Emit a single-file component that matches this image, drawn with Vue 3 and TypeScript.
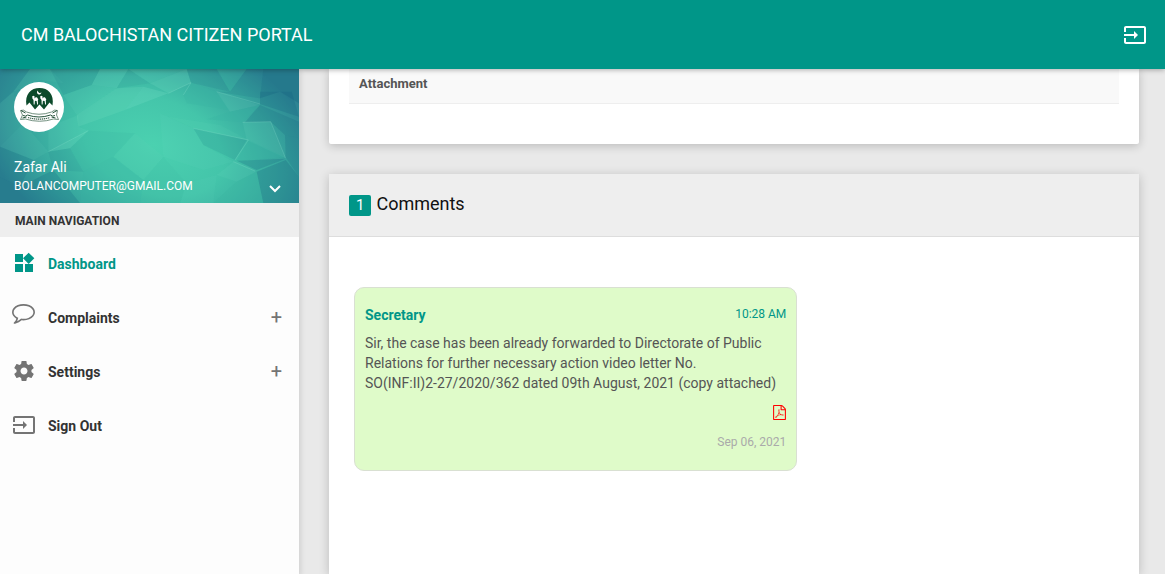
<script setup lang="ts">
import { ref } from 'vue'

interface MenuItem {
  label: string
  icon: string
  viewBox: string
  active?: boolean
  expandable?: boolean
}

interface Facet {
  points: string
  fill: string
  opacity: number
}

interface Comment {
  author: string
  time: string
  date: string
  text: string
  reference: string
  remainder: string
}

const signOutPath =
  'M21 3.01H3c-1.1 0-2 .9-2 2V9h2V4.99h18v14.03H3V15H1v4.01c0 1.1.9 1.98 2 1.98h18c1.1 0 2-.88 2-1.98v-14c0-1.11-.9-2-2-2zM11 16l4-4-4-4v3H1v2h10v3z'

const menu: MenuItem[] = [
  {
    label: 'Dashboard',
    viewBox: '0 0 24 24',
    icon: 'M13 13v8h8v-8h-8zM3 21h8v-8H3v8zM3 3v8h8V3H3zm13.66-1.31L11 7.34 16.66 13l5.66-5.66-5.66-5.65z',
    active: true,
  },
  {
    label: 'Complaints',
    viewBox: '0 334 1870 1870',
    icon: 'M896 384q-204 0-381.500 69.500t-282 187.500-104.500 255q0 112 71.500 213.500t201.500 175.500l87 50-27 96q-24 91-70 172 152-63 275-171l43-38 57 6q69 8 130 8 204 0 381.500-69.500t282-187.500 104.500-255-104.500-255-282-187.500-381.500-69.500zM1792 896q0 174-120 321.500t-326 233-450 85.500q-70 0-145-8-198 175-460 242-49 14-114 22h-5q-15 0-27-10.500t-16-27.500v-1q-3-4-.5-12t2-10 4.500-9.500l6-9 7-8.500 8-9q7-8 31-34.500t34.500-38 31-39.500 32.500-51 27-59 26-76q-157-89-247.500-220t-90.500-281q0-174 120-321.500t326-233 450-85.500 450 85.500 326 233 120 321.500z',
    expandable: true,
  },
  {
    label: 'Settings',
    viewBox: '0 0 24 24',
    icon: 'M19.43 12.98c.04-.32.07-.64.07-.98s-.03-.66-.07-.98l2.110-1.650c.19-.15.24-.42.12-.64l-2-3.460c-.12-.22-.39-.3-.61-.22l-2.490 1c-.52-.4-1.080-.73-1.690-.98l-.38-2.650C14.460 2.180 14.250 2 14 2h-4c-.25 0-.46.18-.49.42l-.38 2.650c-.61.25-1.170.59-1.690.98l-2.490-1c-.23-.09-.49 0-.61.22l-2 3.460c-.13.22-.07.49.12.64l2.110 1.650c-.04.32-.07.65-.07.98s.03.66.07.98l-2.110 1.650c-.19.15-.24.42-.12.64l2 3.460c.12.22.39.3.61.22l2.490-1c.52.4 1.080.73 1.690.98l.38 2.650c.03.24.24.42.49.42h4c.25 0 .46-.18.49-.42l.38-2.650c.61-.25 1.170-.59 1.690-.98l2.490 1c.23.09.49 0 .61-.22l2-3.460c.12-.22.07-.49-.12-.64l-2.110-1.650zM12 15.500c-1.930 0-3.500-1.570-3.500-3.500s1.570-3.500 3.500-3.500 3.500 1.570 3.500 3.500-1.570 3.500-3.500 3.500z',
    expandable: true,
  },
  { label: 'Sign Out', viewBox: '0 0 24 24', icon: signOutPath },
]

const pdfPath =
  'M1596 380q28 28 48 76t20 88v1152q0 40-28 68t-68 28h-1344q-40 0-68-28t-28-68v-1600q0-40 28-68t68-28h896q40 0 88 20t76 48zm-444-244v376h376q-10-29-22-41l-313-313q-12-12-41-22zm384 1528v-1024h-416q-40 0-68-28t-28-68v-416h-768v1536h1280zm-514-593q33 26 84 56 59-7 117-7 147 0 177 49 16 22 2 52 0 1-1 2l-2 2v1q-6 38-71 38-48 0-115-20t-130-53q-221 24-392 83-153 262-242 262-15 0-28-7l-24-12q-1-1-6-5-10-10-6-36 9-40 56-91.500t132-96.500q14-9 23 6 2 2 2 4 52-85 107-197 68-136 104-262-24-82-30.500-159.500t6.500-127.500q11-40 42-40h22q23 0 35 15 18 21 9 68-2 6-4 8 1 3 1 8v30q-2 123-14 192 55 164 146 238zm-576 411q52-24 137-158-51 40-87.500 84t-49.500 74zm398-920q-15 42-2 132 1-7 7-44 0-3 7-43 1-4 4-8-1-1-1-2-1-2-1-3-1-22-13-36 0 1-1 2v2zm-124 661q135-54 284-81-2-1-13-9.500t-16-13.500q-76-67-127-176-27 86-83 197-30 56-45 83zm646-16q-24-24-140-24 76 28 124 28 14 0 18-1 0-1-2-3z'

const light = '#8ff0d4'
const mid = '#38b3a1'
const dark = '#14607e'

const facets: Facet[] = [
  { points: '0,27 90,27 40,95 0,130', fill: dark, opacity: 0.16 },
  { points: '90,27 150,27 190,70 120,60 40,95', fill: light, opacity: 0.06 },
  { points: '150,27 300,27 275,75 190,105', fill: dark, opacity: 0.12 },
  { points: '300,27 385,27 350,85 275,75', fill: light, opacity: 0.1 },
  { points: '385,27 450,70 350,85', fill: dark, opacity: 0.08 },
  { points: '385,27 560,27 450,70', fill: light, opacity: 0.08 },
  { points: '450,70 560,27 573,68 505,100', fill: light, opacity: 0.14 },
  { points: '275,75 350,85 230,165 190,105', fill: light, opacity: 0.07 },
  { points: '230,165 350,85 430,80 375,150 235,200', fill: light, opacity: 0.13 },
  { points: '430,80 505,100 375,150', fill: light, opacity: 0.17 },
  { points: '573,68 560,27 650,27 690,95', fill: dark, opacity: 0.14 },
  { points: '650,27 740,27 690,95', fill: mid, opacity: 0.25 },
  { points: '740,27 790,27 780,115 650,95 690,95', fill: dark, opacity: 0.14 },
  { points: '790,27 897,27 897,130 840,95 780,115', fill: dark, opacity: 0.3 },
  { points: '780,95 875,95 897,170 780,132', fill: dark, opacity: 0.25 },
  { points: '573,68 650,95 690,150 560,130 550,105', fill: mid, opacity: 0.3 },
  { points: '650,95 780,135 690,155', fill: light, opacity: 0.1 },
  { points: '690,155 780,135 728,187 620,178', fill: mid, opacity: 0.3 },
  { points: '735,187 780,135 897,185 897,235 855,225 812,185', fill: dark, opacity: 0.2 },
  { points: '728,187 812,185 857,295 740,240', fill: light, opacity: 0.09 },
  { points: '745,240 857,292 710,302', fill: mid, opacity: 0.3 },
  { points: '580,205 740,240 705,300 610,255', fill: dark, opacity: 0.12 },
  { points: '505,170 660,195 745,240 580,205', fill: light, opacity: 0.06 },
  { points: '710,302 857,296 770,330', fill: dark, opacity: 0.24 },
  { points: '700,305 770,335 710,365 650,345', fill: light, opacity: 0.07 },
  { points: '770,335 857,300 897,350 897,429 790,429', fill: dark, opacity: 0.28 },
  { points: '710,365 770,335 790,429 640,429', fill: mid, opacity: 0.25 },
  { points: '857,292 855,225 897,235 897,350', fill: dark, opacity: 0.2 },
  { points: '480,160 580,205 610,255 700,305 610,330 490,290', fill: light, opacity: 0.05 },
  { points: '145,200 235,165 235,200 265,212 145,275', fill: light, opacity: 0.08 },
  { points: '145,275 265,212 210,265', fill: light, opacity: 0.14 },
  { points: '145,275 210,265 250,335 160,330', fill: dark, opacity: 0.1 },
  { points: '210,265 265,212 405,220 340,290 250,335', fill: mid, opacity: 0.18 },
  { points: '340,290 405,220 490,290 430,360', fill: light, opacity: 0.04 },
  { points: '250,335 340,290 430,360 420,429 240,429', fill: mid, opacity: 0.3 },
  { points: '0,130 40,95 70,190 0,260', fill: light, opacity: 0.04 },
  { points: '0,260 70,190 145,275 100,300', fill: light, opacity: 0.07 },
  { points: '0,260 100,300 60,380 0,350', fill: dark, opacity: 0.16 },
  { points: '0,350 60,380 160,330 240,429 0,429', fill: dark, opacity: 0.22 },
  { points: '430,360 490,290 560,370 540,429 420,429', fill: mid, opacity: 0.1 },
  { points: '560,370 650,345 640,429 540,429', fill: light, opacity: 0.05 },
]

const comments: Comment[] = [
  {
    author: 'Secretary',
    time: '10:28 AM',
    date: 'Sep 06, 2021',
    text: 'Sir, the case has been already forwarded to Directorate of Public Relations for further necessary action video letter No.',
    reference: 'SO(INF:II)2-27/2020/362',
    remainder: 'dated 09th August, 2021 (copy attached)',
  },
]

const opened = ref<string | null>(null)

function toggle(item: MenuItem): void {
  if (item.expandable) opened.value = opened.value === item.label ? null : item.label
}
</script>

<template>
  <div class="page">
    <header class="topbar">
      <a class="brand" href="#">CM BALOCHISTAN CITIZEN PORTAL</a>
      <button class="icon-button" type="button" aria-label="Sign out">
        <svg class="icon" viewBox="0 0 24 24" aria-hidden="true"><path :d="signOutPath" /></svg>
      </button>
    </header>

    <div class="columns">
      <aside class="sidebar">
        <section class="user">
          <svg class="mesh" viewBox="0 27 897 402" preserveAspectRatio="none" aria-hidden="true">
            <defs>
              <radialGradient id="glow" gradientUnits="userSpaceOnUse" cx="0" cy="0" r="1" gradientTransform="translate(460 255) rotate(20) scale(540 350)">
                <stop offset="0" stop-color="#4bd1b0" />
                <stop offset="0.4" stop-color="#44c5aa" />
                <stop offset="0.75" stop-color="#36a49d" />
                <stop offset="1" stop-color="#2d8493" />
              </radialGradient>
            </defs>
            <rect y="27" width="897" height="402" fill="url(#glow)" />
            <polygon v-for="f in facets" :key="f.points" :points="f.points" :fill="f.fill" :fill-opacity="f.opacity" />
            <g fill="none" stroke="#a5f0dc" stroke-opacity="0.3" stroke-width="2">
              <path d="M145 275 265 212M505 100 573 68 550 105M650 95 780 132M728 187 812 185 857 295M580 205 745 240 705 300M700 305 765 333" />
            </g>
          </svg>
          <svg class="avatar" viewBox="0 0 50 50" role="img" aria-label="Balochistan emblem">
            <circle cx="25" cy="25" r="25" fill="#fff" />
            <path d="M12.500 23.500C10.500 12 17 6 25.500 6S40.500 12 38.500 23.500L35.500 20.500 30 27.500 25.500 22.500 21 27.500 15.500 20.500z" fill="#0c4a2b" />
            <path d="M24 8.500a2.200 2.200 0 1 0 3.400 1.800 2 2 0 0 1-3.400-1.800z" fill="#fff" />
            <path id="camel" d="M18 14.500l1.500-.8 1 .5v2.300l1.500-1.500 1.300.8 1 1.700-.5 1 .2 4h-.9l-.5-3.500-1.700-.2-.3 3.700h-.9l-.2-4.500-1.100-1.500-.1-1.500z" fill="#fff" />
            <use href="#camel" x="8" />
            <path d="M6.500 28.500q3-1.500 6 1.500 12.500 4.500 25 0 3-3 6-1.500l-1 4.500 2 4.500-5-.5q-14 4.500-28 0l-5 .5 2-4.500z" fill="#fff" stroke="#4f7360" stroke-width=".8" />
            <path d="M9 33.500q3 1.500 4.500-.5 11.500 4 23 0 2 2 4.500.5M7 28.500l4.500 2.500M43 28.500l-4.500 2.500M8.500 36l4-1M41.500 36l-4-1" fill="none" stroke="#24523a" stroke-width="1" />
            <path d="M14 35.500q11 3.300 22 0" fill="none" stroke="#3c5f4c" stroke-width="1.200" stroke-dasharray="1.300 .7" />
          </svg>
          <div class="identity">
            <div class="who">
              <div class="name">Zafar Ali</div>
              <div class="email">BOLANCOMPUTER@GMAIL.COM</div>
            </div>
            <button class="more" type="button" aria-label="Account menu">
              <svg viewBox="0 0 14 10" aria-hidden="true"><path d="M2 2l5 5 5-5" /></svg>
            </button>
          </div>
        </section>

        <nav aria-label="Main navigation">
          <h2 class="nav-title">MAIN NAVIGATION</h2>
          <ul class="menu">
            <li v-for="item in menu" :key="item.label">
              <a
                class="menu-link"
                :class="{ active: item.active }"
                href="#"
                :aria-expanded="item.expandable ? opened === item.label : undefined"
                @click.prevent="toggle(item)"
              >
                <svg class="icon" :viewBox="item.viewBox" aria-hidden="true"><path :d="item.icon" /></svg>
                <span class="label">{{ item.label }}</span>
                <span v-if="item.expandable" class="sign">{{ opened === item.label ? '–' : '+' }}</span>
              </a>
            </li>
          </ul>
        </nav>
      </aside>

      <main class="content">
        <section class="card details">
          <table class="table">
            <tbody>
              <tr>
                <th scope="row">Attachment</th>
                <td></td>
              </tr>
            </tbody>
          </table>
        </section>

        <section class="card comments">
          <h2 class="card-header">
            <span class="count">{{ comments.length }}</span>
            <span>Comments</span>
          </h2>
          <div class="card-body">
            <article v-for="c in comments" :key="c.reference" class="message">
              <div class="message-head">
                <strong class="author">{{ c.author }}</strong>
                <time class="time">{{ c.time }}</time>
              </div>
              <p class="text">
                {{ c.text }} <span class="reference">{{ c.reference }}</span> {{ c.remainder }}
              </p>
              <a class="file" href="#" aria-label="Open PDF attachment">
                <svg viewBox="128 0 1536 1792" aria-hidden="true"><path :d="pdfPath" /></svg>
              </a>
              <time class="date">{{ c.date }}</time>
            </article>
          </div>
        </section>
      </main>
    </div>
  </div>
</template>

<style>
body {
  margin: 0;
  background: #e9e9e9;
}
</style>

<style scoped>
.page {
  display: flex;
  flex-direction: column;
  height: 100vh;
  overflow: hidden;
  background: #e9e9e9;
  color: #555;
  font-family: Roboto, 'Liberation Sans', sans-serif;
  font-size: 14px;
  line-height: 20px;
}

a {
  color: inherit;
  text-decoration: none;
}

button {
  padding: 0;
  border: 0;
  background: none;
  color: inherit;
  cursor: pointer;
}

svg {
  display: block;
}

.icon {
  width: 24px;
  height: 24px;
  fill: currentColor;
  overflow: visible;
}

.topbar {
  position: relative;
  z-index: 2;
  display: flex;
  flex: none;
  align-items: flex-end;
  justify-content: space-between;
  padding: 22px 18px 22px 21px;
  background: #009688;
  color: #fff;
  box-shadow: 0 1px 5px rgba(0, 0, 0, 0.3);
}

.brand {
  font-size: 18px;
  line-height: 25px;
}

.columns {
  display: flex;
  flex: 1;
  min-height: 0;
}

.sidebar {
  position: relative;
  z-index: 1;
  flex: none;
  width: 299px;
  background: #fdfdfd;
  box-shadow: 2px 2px 5px rgba(0, 0, 0, 0.1);
}

.user {
  position: relative;
  padding: 13px 14px 7px;
  color: #fff;
}

.mesh {
  position: absolute;
  inset: 0;
  width: 100%;
  height: 100%;
}

.avatar {
  position: relative;
  width: 50px;
  height: 50px;
}

.identity {
  position: relative;
  display: flex;
  align-items: flex-end;
  justify-content: space-between;
  margin-top: 26px;
}

.name {
  line-height: 19px;
}

.email {
  font-size: 12px;
  line-height: 19px;
}

.more {
  padding-bottom: 2px;
  padding-right: 3px;
}

.more svg {
  width: 14px;
  height: 10px;
  fill: none;
  stroke: currentColor;
  stroke-width: 2;
}

.nav-title {
  margin: 0;
  padding: 8px 15px 6px;
  background: #eee;
  color: #333;
  font-size: 12px;
  font-weight: 700;
}

.menu {
  margin: 0;
  padding: 0;
  list-style: none;
}

.menu-link {
  display: flex;
  align-items: center;
  gap: 12px;
  padding: 14px 17px 16px 12px;
  color: #747474;
}

.label {
  flex: 1;
  padding-top: 2px;
  line-height: 22px;
  color: #333;
  font-weight: 700;
}

.menu-link.active,
.menu-link.active .label {
  color: #009688;
}

.sign {
  font-size: 20px;
  line-height: 20px;
}

.content {
  display: flex;
  flex: 1;
  flex-direction: column;
  gap: 30px;
  min-width: 0;
  padding: 0 26px 0 30px;
}

.card {
  background: #fff;
  box-shadow: 0 2px 10px rgba(0, 0, 0, 0.2);
}

.details {
  padding: 0 20px 40px;
  border-radius: 0 0 2px 2px;
}

.table {
  width: 100%;
  border-collapse: collapse;
  background: #f9f9f9;
}

.table th,
.table td {
  padding: 5px 10px 9px;
  border-bottom: 1px solid #eee;
  font-size: 13px;
  text-align: left;
}

.comments {
  flex: 1;
}

.card-header {
  display: flex;
  align-items: baseline;
  gap: 5px;
  margin: 0;
  padding: 19px 20px 20px;
  border-bottom: 1px solid #ddd;
  background: #eee;
  color: #111;
  font-size: 18px;
  font-weight: 400;
  line-height: 22px;
}

.count {
  padding: 0 7px;
  border-radius: 2px;
  background: #009688;
  color: #fff;
  font-size: 15px;
  line-height: 21px;
}

.card-body {
  padding: 50px 25px;
}

.message {
  display: flex;
  flex-direction: column;
  box-sizing: border-box;
  width: calc(100% * 7 / 12);
  padding: 17px 10px 18px;
  border: 1px solid #d9e0d2;
  border-radius: 10px;
  background: #dffbc9;
}

.message-head {
  display: flex;
  justify-content: space-between;
}

.author {
  color: #009688;
  font-weight: 700;
}

.time {
  color: #009688;
  font-size: 12px;
  line-height: 18px;
}

.text {
  margin: 8px 0 12px;
}

.reference {
  white-space: nowrap;
}

.file {
  align-self: flex-end;
  color: #f00;
}

.file svg {
  width: 13px;
  height: 15px;
  fill: currentColor;
}

.date {
  align-self: flex-end;
  margin-top: 12px;
  color: #aaa;
  font-size: 12px;
}
</style>
